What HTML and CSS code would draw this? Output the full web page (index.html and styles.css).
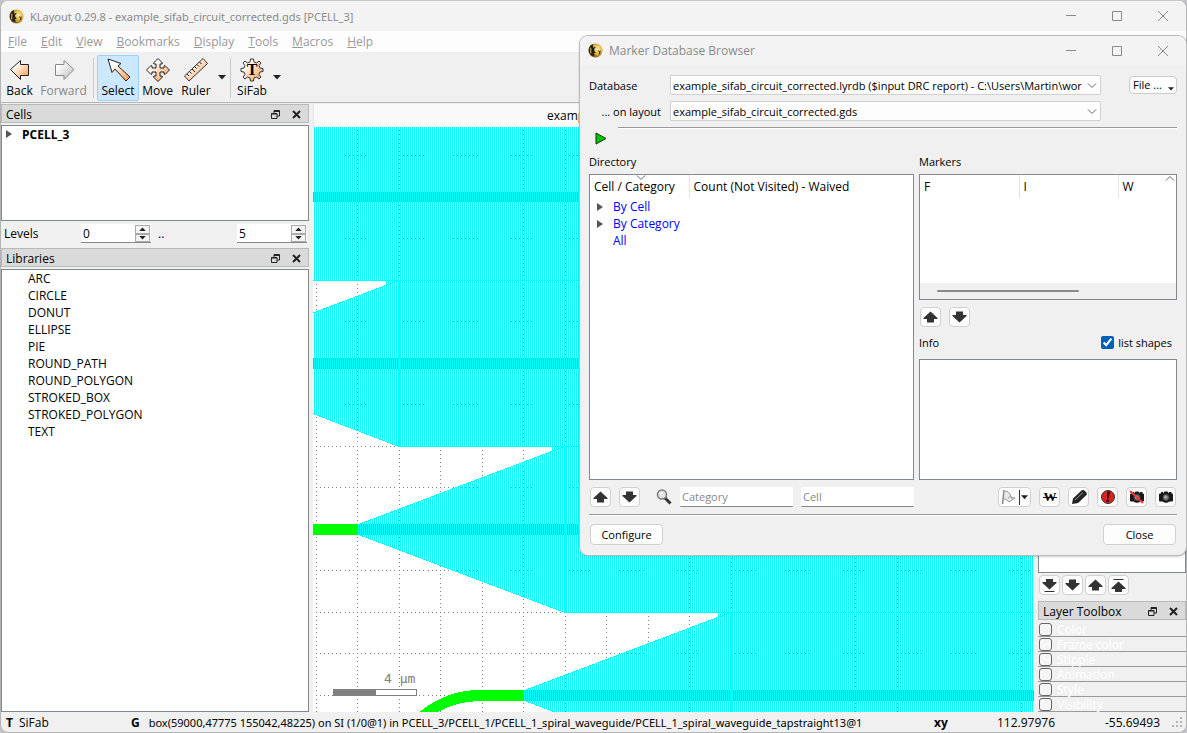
FILE: index.html
```
<!DOCTYPE html>
<html lang="en">
<head>
<meta charset="utf-8">
<title>KLayout 0.29.8</title>
<link rel="stylesheet" href="styles.css">
</head>
<body>
<svg class="defs" aria-hidden="true">
  <defs>
    <linearGradient id="orange" x1="0" y1="0" x2="1" y2="1"><stop offset="0.25" stop-color="#fff"/><stop offset="1" stop-color="#ff9440"/></linearGradient>
    <linearGradient id="grey" x1="0" y1="0" x2="1" y2="1"><stop offset="0.2" stop-color="#fff"/><stop offset="1" stop-color="#bbb"/></linearGradient>
    <radialGradient id="gold" cx="0.65" cy="0.4" r="0.7"><stop offset="0" stop-color="#fff3b0"/><stop offset="0.5" stop-color="#e0ac3c"/><stop offset="1" stop-color="#6b4810"/></radialGradient>
    <symbol id="logo" viewBox="0 0 16 16"><circle cx="8" cy="8" r="7.5" fill="url(#gold)"/><path d="M1 6Q2 2 5 1L6 6 7 14Q3 14 1 9Z" fill="#1a1208" opacity="0.85"/><text x="2" y="11" font-size="9" font-weight="700" font-family="Open Sans, sans-serif" fill="#1a1208">K</text><path d="M11 8l2 3M13 8l-1 4" stroke="#3b2806" fill="none"/><path d="M3 5v6" stroke="#f4dc90"/></symbol>
    <symbol id="up" viewBox="0 0 15 12"><path d="M7.500 .5L14.500 7v1H11v3.500H4V8H.500V7Z" fill="#333"/></symbol>
    <symbol id="down" viewBox="0 0 15 12"><path d="M7.500 11.500L.500 5V4H4V.500h7V4h3.500v1Z" fill="#333"/></symbol>
    <symbol id="bottom" viewBox="0 0 15 15"><path d="M7.500 11.500L.500 5V4H4V1h7v3h3.500v1ZM2.500 13h10v1h-10Z" fill="#333"/></symbol>
    <symbol id="top" viewBox="0 0 15 15"><path d="M7.500 3.500L14.500 10v1H11v3H4v-3H.500v-1ZM2.500 1h10v1h-10Z" fill="#333"/></symbol>
    <symbol id="float" viewBox="0 0 9 9"><path d="M3 4V.5h5.500V6H6M3 1.500h5.500" fill="none" stroke="#222"/><path d="M.5 3.500h5.500v5H.500Z" fill="#dadada" stroke="#222"/><path d="M.5 4h5.500" stroke="#222"/></symbol>
    <symbol id="x" viewBox="0 0 9 9"><path d="M1 1l7 7M8 1L1 8" stroke="#222" stroke-width="2"/></symbol>
    <symbol id="min" viewBox="0 0 12 12"><path d="M1 5.500h10" stroke="#8a8a8a"/></symbol>
    <symbol id="max" viewBox="0 0 12 12"><path d="M1.500 1.500h9v9h-9Z" fill="none" stroke="#8a8a8a"/></symbol>
    <symbol id="close" viewBox="0 0 12 12"><path d="M1 1l10 10M11 1L1 11" stroke="#8a8a8a"/></symbol>
    <symbol id="caret" viewBox="0 0 8 5"><path d="M0 0h8L4 4.500Z" fill="#222"/></symbol>
    <symbol id="branch" viewBox="0 0 6 8"><path d="M0 0l6 4-6 4Z" fill="#555"/></symbol>
    <symbol id="chevron" viewBox="0 0 10 6"><path d="M1 .500l4 4 4-4" fill="none" stroke="#666"/></symbol>
    <symbol id="camera" viewBox="0 0 16 14"><path d="M1 4.500Q1 3.500 2 3.500H3V2H5V3.500L6.500 1.500h3L11 3.500V2h2.500V3.500q1.500 0 1.500 1v6q0 1-1 1H11.500Q8 14 4.500 11.500H2Q1 11.500 1 10.500Z" fill="#181818"/><circle cx="8" cy="7.500" r="3" fill="#777" stroke="#444"/><circle cx="7.500" cy="7" r="1.500" fill="#aaa"/></symbol>
  </defs>
</svg>

<div class="main-window">
  <header class="titlebar">
    <svg class="logo"><use href="#logo"/></svg>
    <span class="title">KLayout 0.29.8 - example_sifab_circuit_corrected.gds [PCELL_3]</span>
    <button class="win-btn" aria-label="Minimize"><svg><use href="#min"/></svg></button>
    <button class="win-btn" aria-label="Maximize"><svg><use href="#max"/></svg></button>
    <button class="win-btn" aria-label="Close window"><svg><use href="#close"/></svg></button>
  </header>

  <nav class="menubar">
    <button><u>F</u>ile</button><button><u>E</u>dit</button><button><u>V</u>iew</button><button><u>B</u>ookmarks</button><button><u>D</u>isplay</button><button><u>T</u>ools</button><button><u>M</u>acros</button><button><u>H</u>elp</button>
  </nav>

  <div class="toolbar">
    <button class="tool"><svg viewBox="0 0 26 26"><path d="M3.500 12.500L13.500 3.500v4h8v11h-8v4Z" fill="url(#orange)" stroke="#222"/></svg>Back</button>
    <button class="tool wide disabled"><svg viewBox="0 0 26 26"><path d="M23 12.500L13 3.500v4H4.500v11H13v4Z" fill="url(#grey)" stroke="#888"/></svg>Forward</button>
    <span class="sep"></span>
    <button class="tool select"><svg viewBox="0 0 26 26"><path d="M3 2l13 4.500-3 2.500 12 11-4 4L10 12l-3 3.500Z" fill="url(#orange)" stroke="#222"/></svg>Select</button>
    <button class="tool"><svg viewBox="0 0 26 26"><path d="M13 1.500l4.500 4.500-.5 1H15v4h4V9l1-.5 4.500 4.500-4.500 4.500-1-.5v-2h-4v4h2l.5 1-4.500 4.500-4.500-4.500.5-1h2v-4H7v2l-1 .5L1.500 13 6 8.500l1 .5v2h4V7H9l-.5-1Z" fill="url(#orange)" stroke="#222"/></svg>Move</button>
    <button class="tool ruler"><svg viewBox="0 0 26 26"><path d="M1.500 19L20 1.500l4.500 5L6 24Z" fill="url(#orange)" stroke="#333"/><path d="M4 17l2 2M6.500 14.500l2 2M9 12l3 3M11.500 9.500l2 2M14 7.500l2 2M16.500 5l2 2" stroke="#111"/></svg>Ruler</button>
    <button class="drop" aria-label="Ruler options"><svg><use href="#caret"/></svg></button>
    <span class="sep"></span>
    <button class="tool sifab"><svg viewBox="0 0 26 26"><path d="M11.500 2h3l.5 3 2.500 1 2.500-2 2 2-2 2.500 1 2.500 3 .5v3l-3 .5-1 2.500 2 2.500-2 2-2.500-2-2.500 1-.5 3h-3l-.5-3-2.500-1-2.500 2-2-2 2-2.500-1-2.500-3-.5v-3l3-.5 1-2.500-2-2.500 2-2 2.500 2 2.500-1Z" fill="url(#orange)" stroke="#333"/><text x="13" y="18" text-anchor="middle" font-family="Liberation Serif, serif" font-weight="700" font-size="16">T</text></svg>SiFab</button>
    <button class="drop" aria-label="SiFab options"><svg><use href="#caret"/></svg></button>
  </div>

  <main class="workspace">
    <aside class="dock left">
      <h2 class="dock-title">Cells<button aria-label="Float cells"><svg><use href="#float"/></svg></button><button aria-label="Close cells"><svg><use href="#x"/></svg></button></h2>
      <div class="list cells"><svg class="twig"><use href="#branch"/></svg><b>PCELL_3</b></div>
      <div class="levels">
        <label for="lvmin">Levels</label>
        <span class="spin"><input id="lvmin" value="0"><span class="steps"><button aria-label="Raise first level"><svg><use href="#caret"/></svg></button><button aria-label="Lower first level"><svg><use href="#caret"/></svg></button></span></span>
        <span class="dots">..</span>
        <span class="spin"><input aria-label="Last level" value="5"><span class="steps"><button aria-label="Raise last level"><svg><use href="#caret"/></svg></button><button aria-label="Lower last level"><svg><use href="#caret"/></svg></button></span></span>
      </div>
      <h2 class="dock-title">Libraries<button aria-label="Float libraries"><svg><use href="#float"/></svg></button><button aria-label="Close libraries"><svg><use href="#x"/></svg></button></h2>
      <ul class="list libs">
        <li>ARC</li><li>CIRCLE</li><li>DONUT</li><li>ELLIPSE</li><li>PIE</li><li>ROUND_PATH</li><li>ROUND_POLYGON</li><li>STROKED_BOX</li><li>STROKED_POLYGON</li><li>TEXT</li>
      </ul>
    </aside>

    <section class="view">
      <div class="tab">example</div>
      <svg class="canvas" shape-rendering="crispEdges">
        <defs>
          <pattern id="stripe" width="2" height="2" patternUnits="userSpaceOnUse"><rect width="1" height="2" fill="#0ff"/></pattern>
        </defs>
        <g transform="translate(-313 -127)">
          <path id="grid" fill="#808080"/>
          <g fill="#0f0">
            <path d="M313 192h3000v10H313ZM313 358h3000v11H313ZM313 524h3000v11H313Z"/>
            <path d="M416 715Q444 690 480 690H3000V701H478Q452 702 434 715Z"/>
          </g>
          <g fill="url(#stripe)">
            <path d="M313 127H3000V281H313Z"/>
            <path d="M313 313L399 281H3000V446H399L313 413Z"/>
            <path d="M358 525L565 447H3000V612H565L358 534Z"/>
            <path d="M524 691L731 613H3000V778H731L524 700Z"/>
            <path d="M385 281h14v2l-12 3ZM551 447h14v2l-12 3ZM717 613h14v2l-12 3Z"/>
          </g>
          <g fill="none" stroke="#0ff">
            <path d="M313 280.500H3000M313 313L399 280.500M313 413.500L399 446.500H3000"/>
            <path d="M3000 612.500H565L358.500 534.500V524.500L565 446.500M731 612.500L524.500 690.500V700.500L731 778.500"/>
          </g>
          <path d="M398 281h3v165h-3ZM564 447h3v165h-3ZM730 613h3v165h-3Z" fill="#0ff"/>
          <path d="M333.500 689.500h83v6h-83Z" fill="#fff" stroke="#808080"/>
          <path d="M333 689h43v7h-43Z" fill="#808080"/>
          <text x="384" y="683" class="scale" xml:space="preserve">4 µm</text>
        </g>
      </svg>
    </section>

    <aside class="dock right">
      <div class="list layers"></div>
      <div class="layer-buttons">
        <button class="icon-btn" aria-label="To bottom"><svg class="barred"><use href="#bottom"/></svg></button>
        <button class="icon-btn" aria-label="Down one"><svg><use href="#down"/></svg></button>
        <button class="icon-btn" aria-label="Up one"><svg><use href="#up"/></svg></button>
        <button class="icon-btn" aria-label="To top"><svg class="barred"><use href="#top"/></svg></button>
      </div>
      <h2 class="dock-title">Layer Toolbox<button aria-label="Float toolbox"><svg><use href="#float"/></svg></button><button aria-label="Close toolbox"><svg><use href="#x"/></svg></button></h2>
      <div class="toolbox">
        <label><input type="checkbox">Color</label>
        <label><input type="checkbox">Frame color</label>
        <label><input type="checkbox">Stipple</label>
        <label><input type="checkbox">Animation</label>
        <label><input type="checkbox">Style</label>
        <label><input type="checkbox">Visibility</label>
      </div>
    </aside>
  </main>

  <footer class="status">
    <b>T</b><span class="tech">SiFab</span><b>G</b>
    <span class="message">box(59000,47775 155042,48225) on SI (1/0@1) in PCELL_3/PCELL_1/PCELL_1_spiral_waveguide/PCELL_1_spiral_waveguide_tapstraight13@1</span>
    <b class="xy">xy</b><span class="coord">112.97976</span><span class="coord">-55.69493</span>
    <svg class="grip" viewBox="0 0 10 10"><path d="M8 0h2v2H8ZM8 4h2v2H8ZM4 4h2v2H4ZM8 8h2v2H8ZM4 8h2v2H4ZM0 8h2v2H0Z" fill="#b4b4b4"/></svg>
  </footer>
</div>

<div class="dialog" role="dialog" aria-label="Marker Database Browser">
  <header class="titlebar">
    <svg class="logo"><use href="#logo"/></svg>
    <span class="title">Marker Database Browser</span>
    <button class="win-btn" aria-label="Minimize browser"><svg><use href="#min"/></svg></button>
    <button class="win-btn" aria-label="Maximize browser"><svg><use href="#max"/></svg></button>
    <button class="win-btn" aria-label="Close browser"><svg><use href="#close"/></svg></button>
  </header>
  <div class="dialog-body">
    <div class="source">
      <label for="db">Database</label>
      <span class="combo"><select id="db"><option>example_sifab_circuit_corrected.lyrdb ($input DRC report) - C:\Users\Martin\workspace</option></select><svg><use href="#chevron"/></svg></span>
      <button class="file">File ...<svg><use href="#caret"/></svg></button>
      <label for="layout" class="on-layout">... on layout</label>
      <span class="combo"><select id="layout"><option>example_sifab_circuit_corrected.gds</option></select><svg><use href="#chevron"/></svg></span>
    </div>
    <div class="run-row">
      <button class="run" aria-label="Run"><svg viewBox="0 0 12 13"><path d="M1 1l10 5.500L1 12Z" fill="#00c800" stroke="#063506"/></svg></button>
      <hr>
    </div>
    <div class="panes">
      <section class="pane">
        <h3>Directory</h3>
        <div class="box directory">
          <svg class="sort"><use href="#chevron"/></svg>
          <table>
            <thead><tr><th class="category">Cell / Category</th><th>Count (Not Visited) - Waived</th></tr></thead>
            <tbody>
              <tr><td><svg class="twig"><use href="#branch"/></svg>By Cell</td><td></td></tr>
              <tr><td><svg class="twig"><use href="#branch"/></svg>By Category</td><td></td></tr>
              <tr><td class="leaf">All</td><td></td></tr>
            </tbody>
          </table>
        </div>
      </section>
      <section class="pane">
        <h3>Markers</h3>
        <div class="box markers">
          <svg class="sort"><use href="#chevron"/></svg>
          <table><thead><tr><th class="flag">F</th><th class="flag">I</th><th>W</th></tr></thead></table>
          <div class="scroll"><div class="thumb"></div></div>
        </div>
        <div class="marker-nav">
          <button class="icon-btn" aria-label="Previous marker"><svg><use href="#up"/></svg></button>
          <button class="icon-btn" aria-label="Next marker"><svg><use href="#down"/></svg></button>
        </div>
        <div class="info-head"><h3>Info</h3><label><input type="checkbox" class="tick" checked>list shapes</label></div>
        <div class="box info"></div>
      </section>
    </div>
    <div class="actions">
      <button class="icon-btn" aria-label="Previous item"><svg><use href="#up"/></svg></button>
      <button class="icon-btn" aria-label="Next item"><svg><use href="#down"/></svg></button>
      <svg class="search" viewBox="0 0 16 16"><path d="M9 9l5.500 5.500" stroke="#333" stroke-width="3"/><circle cx="6" cy="5.500" r="4.500" fill="#e4e4e4" stroke="#777" stroke-width="1.500"/><path d="M4 5q0-2 2-2" stroke="#fff" fill="none"/></svg>
      <input class="filter" placeholder="Category" aria-label="Category">
      <input class="filter" placeholder="Cell" aria-label="Cell">
      <span class="spacer"></span>
      <button class="icon-btn flagger" aria-label="Flag"><svg class="pic" viewBox="0 0 16 16"><path d="M3.500 2Q7 2 9 5L10 8 14 9 8 13Q5 9 3 10" fill="#e8e8e8" stroke="#999"/><path d="M3 1L1.500 15" stroke="#888" stroke-width="1.500"/><path d="M7 9q3-3 4 1" fill="none" stroke="#999"/></svg><span></span><svg class="small"><use href="#caret"/></svg></button>
      <button class="icon-btn" aria-label="Waive"><svg class="pic" viewBox="0 0 16 16"><text x="8" y="12" text-anchor="middle" font-family="Liberation Serif, serif" font-weight="700" font-size="13">W</text><path d="M1 8.500h14" stroke="#111"/></svg></button>
      <button class="icon-btn" aria-label="Edit"><svg class="pic" viewBox="0 0 16 16"><path d="M1 15l1-5.500L10 2Q12 0 14.500 2.500T15 6.500L7 14Z" fill="#222"/><path d="M4 11l8-7.500" stroke="#999"/></svg></button>
      <button class="icon-btn" aria-label="Important"><svg class="pic" viewBox="0 0 16 16"><circle cx="8" cy="8" r="6.500" fill="#e02020" stroke="#333"/><path d="M7 2.500h3.500L8.500 9.500h-1.500ZM6.500 10.500h2.500v2.500H6.500Z" fill="#301010"/></svg></button>
      <button class="icon-btn" aria-label="Remove snapshot"><svg class="pic" viewBox="0 0 16 16"><use href="#camera" y="1" width="16" height="14"/><path d="M1 2l13 12" stroke="#f33" stroke-width="2"/></svg></button>
      <button class="icon-btn" aria-label="Snapshot"><svg class="pic" viewBox="0 0 16 16"><use href="#camera" y="1" width="16" height="14"/></svg></button>
    </div>
    <hr>
    <div class="buttons"><button class="push">Configure</button><button class="push">Close</button></div>
  </div>
</div>
<script src="grid.js"></script>
</body>
</html>
```
FILE: styles.css
```
* { box-sizing: border-box; }
html, body { height: 100%; margin: 0; }
body {
  background: #c4c4c8;
  color: #000;
  font: 12px/17px "Open Sans", "Noto Sans", sans-serif;
  overflow: hidden;
}
button, input, select { font: inherit; color: inherit; margin: 0; padding: 0; }
button { background: none; border: 0; }
h2, h3 { margin: 0; font: inherit; }
svg { display: block; flex: none; }
.defs { position: absolute; width: 0; height: 0; }

.main-window {
  height: 100vh;
  display: flex;
  flex-direction: column;
  background: #f0f0f0;
  border: 1px solid #b4b4b4;
  border-top-color: #c8c8c8;
  border-radius: 8px;
  overflow: hidden;
}
.titlebar { display: flex; align-items: center; height: 30px; background: #f3f3f3; color: #8a8a8a; padding: 0 0 0 8px; }
.logo { width: 15px; height: 15px; margin-right: 6px; }
.title { flex: 1; white-space: nowrap; }
.main-window .title, .message { font-family: "Noto Sans", sans-serif; font-size: 11px; }
.win-btn { width: 46px; height: 28px; display: grid; place-items: center; }
.win-btn svg { width: 12px; height: 12px; }

.menubar { display: flex; height: 22px; gap: 14px; padding: 0 7px; background: #fdfdfd; color: #999; border-bottom: 1px solid #eee; }
.toolbar { display: flex; height: 50px; padding: 0; align-items: center; border-bottom: 1px solid #b4b4b4; }
.tool { display: flex; flex-direction: column; align-items: center; justify-content: space-between; width: 37px; height: 46px; padding: 1px 0 2px; border: 1px solid transparent; line-height: 16px; }
.tool svg { width: 26px; height: 26px; }
.tool.wide { width: 51px; }
.tool.disabled { color: #888; }
.tool.ruler { width: 40px; }
.tool.select { width: 42px; background: #cce8ff; border-color: #99d1ff; border-radius: 2px; }
.tool.sifab { width: 38px; }
.sep { width: 1px; height: 40px; background: #ccc; margin: 0 3px 0 4px; }
.drop { width: 12px; display: grid; place-items: center; }
.drop svg { width: 8px; height: 5px; }
.drop + .sep { margin: 0 2px 0 2px; }

.workspace { flex: 1; min-height: 0; display: flex; gap: 4px; padding-top: 1px; }
.dock { display: flex; flex-direction: column; }
.left { width: 308px; }
.right { width: 148px; }
.dock-title { display: flex; align-items: center; height: 19px; padding: 1px 7px 0 4px; background: #dadada; border: 1px solid #b9b9b9; flex: none; margin-bottom: 2px; }
.dock-title button { width: 9px; height: 9px; margin-left: 12px; }
.dock-title button:first-of-type { margin-left: auto; }
.dock-title svg { width: 9px; height: 9px; }
.list { background: #fff; border: 1px solid #828790; margin: 0; padding: 0; }
.cells { display: flex; align-items: flex-start; height: 96px; padding-left: 4px; }
.twig { width: 6px; height: 8px; }
.cells .twig { margin: 4px 10px 0 0; }
.levels { display: flex; align-items: center; height: 27px; padding: 0 2px 2px 3px; }
.levels label { width: 77px; }
.spin { display: flex; width: 70px; height: 19px; background: #fff; border-bottom: 1px solid #888; }
.spin input { width: 54px; border: 0; padding-left: 2px; background: none; outline: 0; }
.steps { display: flex; flex-direction: column; width: 15px; height: 18px; padding-top: 1px; }
.steps button { flex: 1; border: 1px solid #aaa; background: #f5f5f5; display: grid; place-items: center; }
.steps svg { width: 7px; height: 4px; }
.steps button:first-child svg { transform: rotate(180deg); }
.dots { flex: 1; padding-left: 7px; }
.libs { flex: 1; list-style: none; padding-left: 26px; }

.view { flex: 1; min-width: 0; display: flex; flex-direction: column; }
.tab { height: 23px; flex: none; line-height: 24px; padding-left: 233px; background: #f9f9f9; border-left: 1px solid #e5e5e5; white-space: nowrap; overflow: hidden; }
.canvas { flex: 1; width: 100%; min-height: 0; background: #fff; }
.scale { font: 13px "DejaVu Sans Mono", monospace; fill: #808080; }

.layers { flex: 1; min-height: 60px; }
.layer-buttons { display: flex; gap: 2px; padding: 2px 1px 6px; }
.icon-btn { width: 21px; height: 20px; background: #fdfdfd; border: 1px solid #d0d0d0; border-radius: 4px; display: grid; place-items: center; flex: none; }
.icon-btn svg { width: 15px; height: 12px; }
.icon-btn .pic { width: 16px; height: 16px; }
.icon-btn .barred { height: 15px; }
.toolbox { display: flex; flex-direction: column; }
.toolbox label { display: flex; align-items: center; height: 15px; gap: 5px; padding-left: 1px; color: #fff; border-bottom: 1px solid #999; }
.toolbox input { appearance: none; width: 13px; height: 13px; border: 1px solid #666; border-radius: 3px; background: #f5f5f5; }

.status { display: flex; align-items: center; height: 20px; flex: none; padding: 0 4px 0 5px; white-space: nowrap; }
.tech { flex: none; width: 118px; padding-left: 6px; }
.message { flex: 1; padding-left: 9px; min-width: 0; overflow: hidden; }
.xy { width: 16px; }
.coord { width: 105px; text-align: right; }
.grip { width: 10px; height: 10px; margin-left: 12px; }

.dialog { position: absolute; left: 580px; top: 36px; right: 1px; background: #f0f0f0; border-radius: 8px; overflow: hidden; box-shadow: 0 0 0 1px #bbb, 0 1px 3px #0006; font-size: 11px; }
.dialog .titlebar { height: 29px; }
.dialog .title, .dialog table { font-size: 12px; }
.dialog-body { padding: 10px 9px; display: flex; flex-direction: column; }
.source { display: grid; grid-template-columns: 72px 1fr auto; column-gap: 9px; row-gap: 6px; align-items: center; }
.on-layout { text-align: right; }
.combo { position: relative; margin-right: 19px; }
.combo select { appearance: none; display: block; width: 100%; height: 20px; padding: 0 18px 0 2px; background: #fdfdfd; border: 1px solid #d0d0d0; border-radius: 1px; }
.combo svg { position: absolute; right: 4px; top: 8px; width: 10px; height: 6px; pointer-events: none; }
.file { display: flex; align-items: flex-end; justify-content: space-between; width: 48px; height: 18px; line-height: 16px; padding: 0 2px 0 3px; background: #fdfdfd; border: 1px solid #ccc; border-radius: 4px; }
.file svg { width: 6px; height: 4px; margin-bottom: 2px; }
.run-row { display: flex; margin-top: 6px; height: 26px; align-items: flex-start; }
.run { width: 29px; padding: 5px 0 0 6px; }
.run svg { width: 12px; height: 13px; }
.run-row hr { flex: 1; }
hr { border: 0; border-top: 1px solid #999; border-bottom: 1px solid #fff; margin: 0; }
.panes { display: grid; grid-template-columns: 325fr 258fr; gap: 5px; }
.pane { display: flex; flex-direction: column; min-width: 0; }
.pane > h3 { height: 21px; line-height: 17px; }
.box { position: relative; background: #fff; border: 1px solid #828790; }
.directory { flex: 1; min-height: 306px; }
.sort { position: absolute; width: 10px; height: 6px; }
.directory .sort { left: 46px; top: 0; }
.markers .sort { right: 1px; top: 0; transform: rotate(180deg); }
table { border-collapse: collapse; width: 100%; table-layout: fixed; }
th { height: 23px; padding: 0 0 0 4px; text-align: left; font-weight: 400; border-right: 1px solid #e5e5e5; }
th:last-child { border-right: 0; }
.category, .flag { width: 99px; }
td { height: 17px; padding: 0 0 0 7px; color: #00f; white-space: nowrap; }
td .twig { display: inline-block; margin-right: 10px; }
td.leaf { padding-left: 23px; }
.markers { height: 126px; display: flex; flex-direction: column; justify-content: space-between; }
.scroll { height: 16px; background: #f0f0f0; padding: 7px 97px 0 17px; }
.thumb { height: 2px; background: #8a8a8a; border-radius: 1px; }
.marker-nav { display: flex; gap: 8px; padding: 7px 1px; }
.info-head { display: flex; justify-content: space-between; height: 25px; padding-right: 5px; }
.info-head label { display: flex; align-items: center; gap: 4px; height: 17px; }
.tick { accent-color: #0060b9; width: 13px; height: 13px; }
.info { flex: 1; }
.actions { display: flex; align-items: center; gap: 8px; padding: 7px 1px; }
.search { width: 16px; height: 16px; margin: 0 0 0 8px; }
.filter { width: 113px; height: 20px; padding: 0 2px; border: 0; border-bottom: 1px solid #888; background: #fff; border-radius: 1px; outline: 0; }
.filter::placeholder { color: #888; }
.spacer { flex: 1; }
.flagger { width: 33px; display: flex; align-items: center; justify-content: space-between; padding: 0 2px; }
.flagger span { height: 15px; border-left: 1px solid #333; }
.flagger .small { width: 7px; height: 5px; }
.buttons { display: flex; justify-content: space-between; padding: 8px 1px 0; }
.push { width: 73px; height: 21px; background: #fdfdfd; border: 1px solid #d0d0d0; border-radius: 4px; }
```
FILE: grid.js
```
// Dotted layout grid: one line per 2 µm, ten dots per cell.
const cell = 41.5, x0 = 316.06, y0 = 155.6, step = cell / 10;
const cols = Math.ceil(window.innerWidth / cell) * 10;
const rows = Math.ceil(window.innerHeight / cell) * 10;
let d = "";
for (let i = 0; i < cols; i++) {
  for (let j = -10; j < rows; j++) {
    if (i % 10 === 0 || j % 10 === 0) {
      d += `M${Math.floor(x0 + i * step)} ${Math.floor(y0 + j * step)}h1v1h-1Z`;
    }
  }
}
document.getElementById("grid").setAttribute("d", d);
```
